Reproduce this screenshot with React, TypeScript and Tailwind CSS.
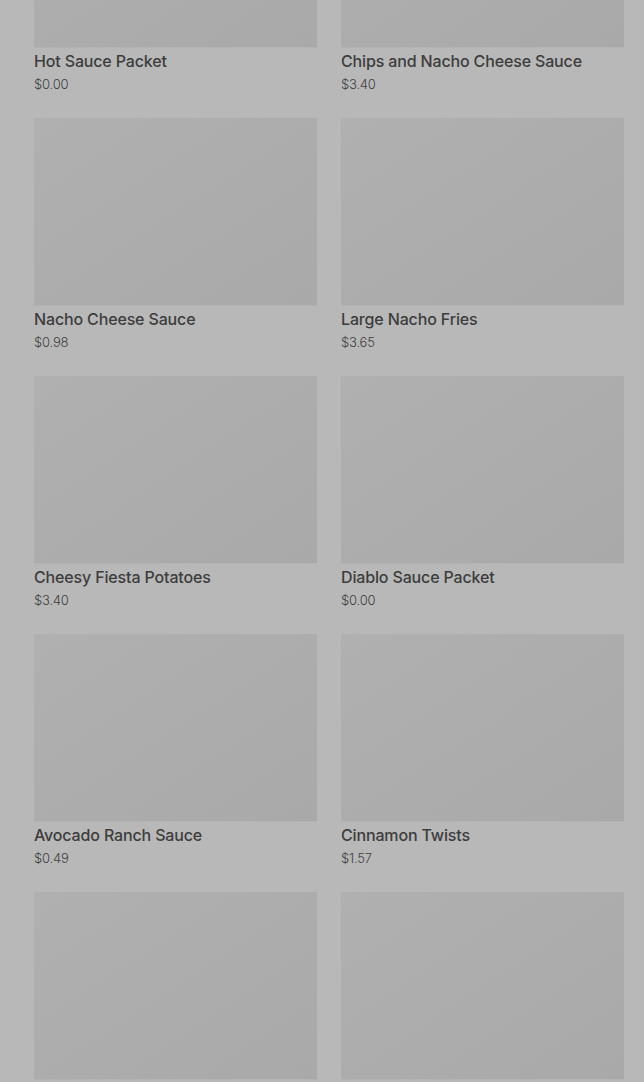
import React from 'react';

interface Item {
  name?: string;
  price?: string;
}

const items: Item[] = [
  { name: 'Hot Sauce Packet', price: '$0.00' },
  { name: 'Chips and Nacho Cheese Sauce', price: '$3.40' },
  { name: 'Nacho Cheese Sauce', price: '$0.98' },
  { name: 'Large Nacho Fries', price: '$3.65' },
  { name: 'Cheesy Fiesta Potatoes', price: '$3.40' },
  { name: 'Diablo Sauce Packet', price: '$0.00' },
  { name: 'Avocado Ranch Sauce', price: '$0.49' },
  { name: 'Cinnamon Twists', price: '$1.57' },
  // below the fold, names not visible
  {},
  {},
];

const ProductCard: React.FC<{ item: Item }> = ({ item }) => {
  return (
    <div className="flex flex-col">
      {/* Image placeholder */}
      <div className="h-[188px] w-full bg-gradient-to-br from-[#b0b0b0] to-[#a9a9a9] border-b border-[#b3b3b3]" />
      {item.name && (
        <>
          <div className="mt-[2px] text-[16px] leading-[22px] font-medium text-[#3d3d3d] tracking-[-0.15px]">
            {item.name}
          </div>
          <div className="text-[13px] leading-[24px] font-light text-[#404040] tracking-[-0.2px]">
            {item.price}
          </div>
        </>
      )}
    </div>
  );
};

export default function App() {
  return (
    <div
      className="h-[1082px] w-full overflow-hidden bg-[#b8b8b8]"
      style={{ fontFamily: 'Inter, "Liberation Sans", sans-serif' }}
    >
      <div className="mt-[-140px] grid grid-cols-2 gap-x-[24px] gap-y-[22px] pl-[34px] pr-[20px]">
        {items.map((item, i) => (
          <ProductCard key={i} item={item} />
        ))}
      </div>
    </div>
  );
}
